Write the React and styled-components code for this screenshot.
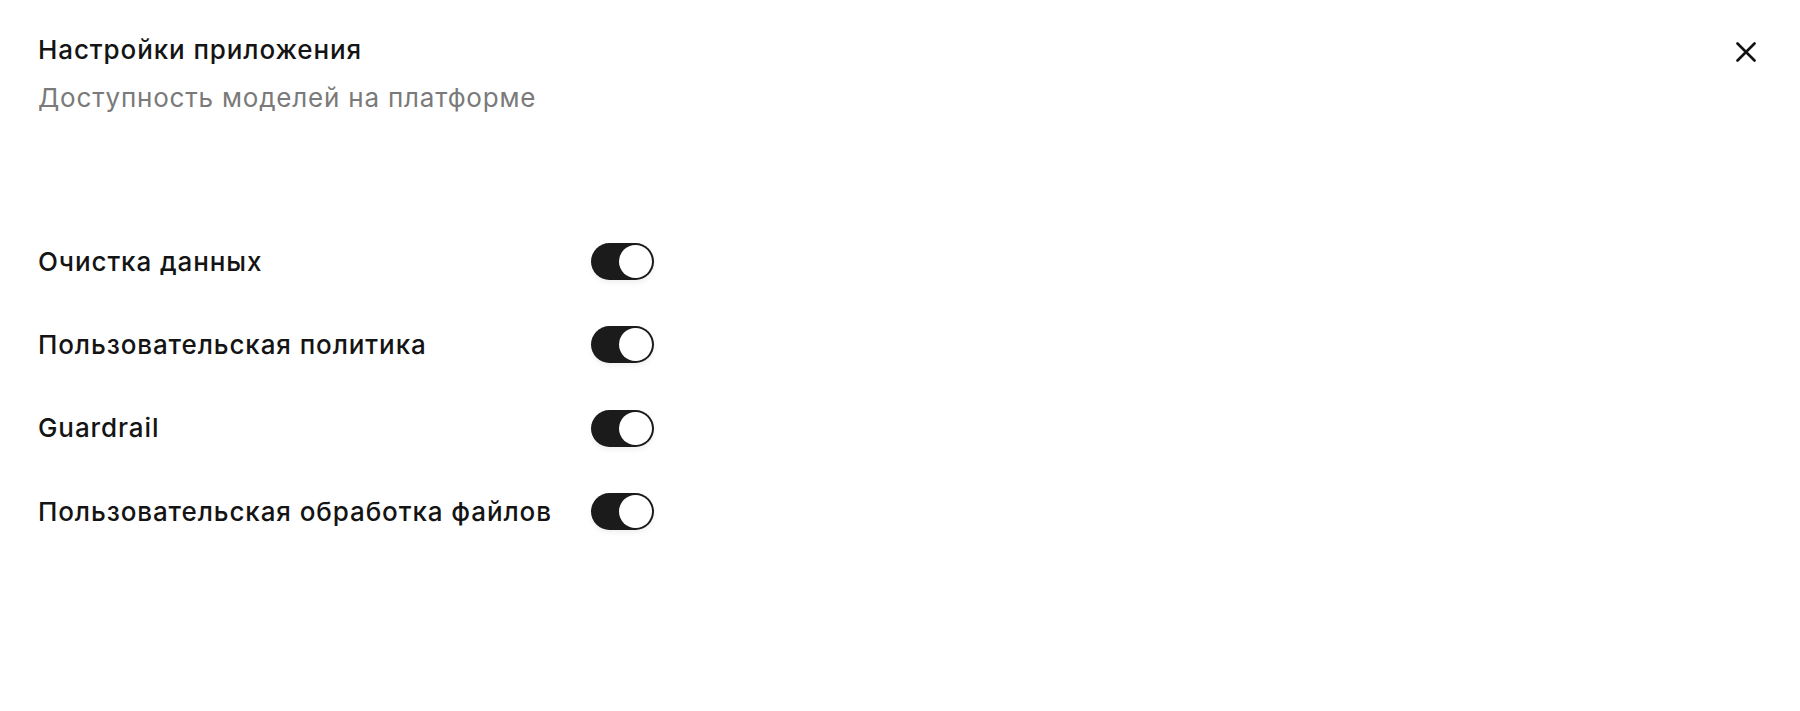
import { useState } from "react";
import styled, { createGlobalStyle } from "styled-components";

const GlobalStyle = createGlobalStyle`
   html, body{
      margin: 0;
      padding: 0;
      background: #ffffff;
   }
   body{
      font-family: Inter, "Noto Sans", "Liberation Sans", sans-serif;
      color: #141414;
      -webkit-font-smoothing: antialiased;
   }
`

const Panel = styled.div`
   &{
      width: 1800px;
      min-height: 711px;
      box-sizing: border-box;
      padding: 35px 39px 0 38px;
      background: #ffffff;
   }
`

const Header = styled.header`
   display: flex;
   justify-content: space-between;
   align-items: flex-start;
`

const Heading = styled.div`
   display: flex;
   flex-direction: column;
   gap: 18px;

   & > h2{
      margin: 0;
      font-size: 26px;
      line-height: 30px;
      font-weight: 500;
      letter-spacing: 0.9px;
      color: #141414;
   }
   & > p{
      margin: 0;
      font-size: 26px;
      line-height: 30px;
      font-weight: 400;
      letter-spacing: 0.8px;
      color: #7a7a7a;
   }
`

const CloseButton = styled.button`
   width: 30px;
   height: 30px;
   margin-top: 2px;
   padding: 0;
   border: none;
   background: transparent;
   display: flex;
   align-items: center;
   justify-content: center;
   cursor: pointer;
   color: #111111;
`

const SettingsList = styled.div`
   display: grid;
   grid-template-columns: 553px auto;
   grid-auto-rows: 83.3px;
   align-items: center;
   justify-content: start;
   margin-top: 107px;
`

const Label = styled.span`
   font-size: 26px;
   line-height: 30px;
   font-weight: 500;
   letter-spacing: 0.9px;
   color: #141414;
`

const Switch = styled.button`
   position: relative;
   width: 63px;
   height: 37px;
   padding: 0;
   border: none;
   border-radius: 999px;
   background: ${({ $on }) => ($on ? "#1b1b1b" : "#d4d4d4")};
   box-shadow: 0 3px 5px rgba(0, 0, 0, 0.06);
   cursor: pointer;

   &::after{
      content: "";
      position: absolute;
      top: 2px;
      left: ${({ $on }) => ($on ? "28px" : "2px")};
      width: 33px;
      height: 33px;
      border-radius: 50%;
      background: #ffffff;
      transition: left 0.15s ease;
   }
`

function CloseIcon(){
   return(
      <svg width="20" height="20" viewBox="0 0 20 20" fill="none">
         <path d="M1.5 1.5L18.5 18.5M18.5 1.5L1.5 18.5" stroke="currentColor" strokeWidth="2.6" strokeLinecap="round"/>
      </svg>
   )
}

const initialSettings = [
   { id: "cleanup", label: "Очистка данных", on: true },
   { id: "policy", label: "Пользовательская политика", on: true },
   { id: "guardrail", label: "Guardrail", on: true },
   { id: "files", label: "Пользовательская обработка файлов", on: true },
]

export default function App(){
   const [settings, setSettings] = useState(initialSettings)

   const toggle = (id) => {
      setSettings((list) => list.map((s) => (s.id === id ? { ...s, on: !s.on } : s)))
   }

   return(
      <>
         <GlobalStyle/>
         <Panel>
            <Header>
               <Heading>
                  <h2>Настройки приложения</h2>
                  <p>Доступность моделей на платформе</p>
               </Heading>
               <CloseButton aria-label="Закрыть">
                  <CloseIcon/>
               </CloseButton>
            </Header>

            <SettingsList>
               {settings.map((s) => [
                  <Label key={s.id + "-label"}>{s.label}</Label>,
                  <Switch key={s.id + "-switch"} $on={s.on} role="switch" aria-checked={s.on} onClick={() => toggle(s.id)}/>,
               ])}
            </SettingsList>
         </Panel>
      </>
   )
}
